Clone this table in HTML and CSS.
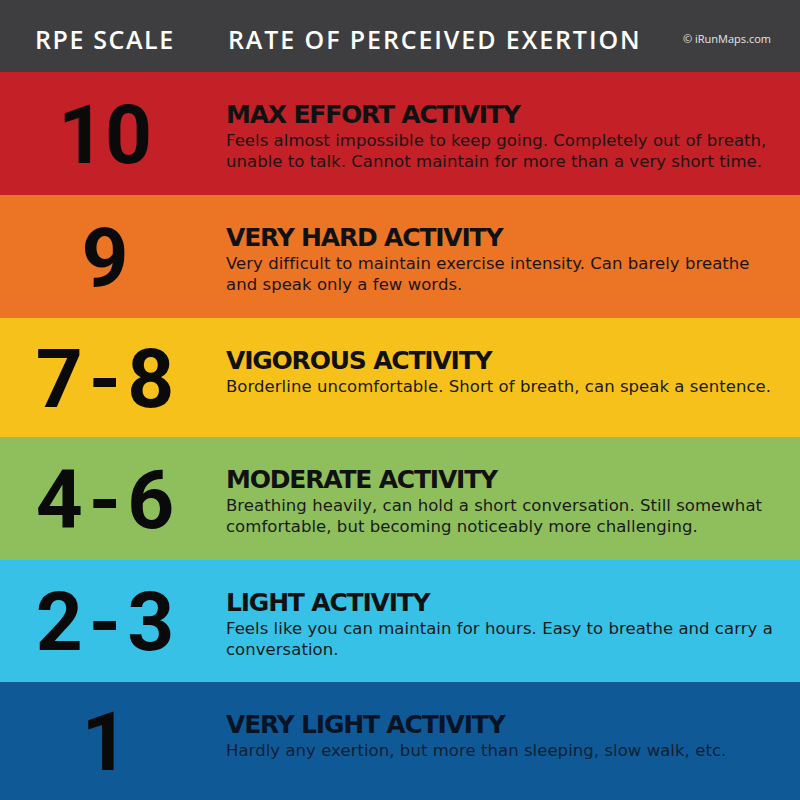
FILE: index.html
```html
<!DOCTYPE html>
<html>
<head>
<meta charset="utf-8">
<link rel="stylesheet" href="styles.css">
</head>
<body>
<div class="chart">
  <header class="head">
    <div class="head-left">RPE SCALE</div>
    <div class="head-title">RATE OF PERCEIVED EXERTION</div>
    <div class="head-credit">© iRunMaps.com</div>
  </header>
  <section class="row r10">
    <div class="num">10</div>
    <div class="text">
      <h2>MAX EFFORT ACTIVITY</h2>
      <p>Feels almost impossible to keep going. Completely out of breath,<br>unable to talk. Cannot maintain for more than a very short time.</p>
    </div>
  </section>
  <section class="row r9">
    <div class="num">9</div>
    <div class="text">
      <h2>VERY HARD ACTIVITY</h2>
      <p>Very difficult to maintain exercise intensity. Can barely breathe<br>and speak only a few words.</p>
    </div>
  </section>
  <section class="row r78">
    <div class="num">7-8</div>
    <div class="text">
      <h2>VIGOROUS ACTIVITY</h2>
      <p>Borderline uncomfortable. Short of breath, can speak a sentence.</p>
    </div>
  </section>
  <section class="row r46">
    <div class="num">4-6</div>
    <div class="text">
      <h2>MODERATE ACTIVITY</h2>
      <p>Breathing heavily, can hold a short conversation. Still somewhat<br>comfortable, but becoming noticeably more challenging.</p>
    </div>
  </section>
  <section class="row r23">
    <div class="num">2-3</div>
    <div class="text">
      <h2>LIGHT ACTIVITY</h2>
      <p>Feels like you can maintain for hours. Easy to breathe and carry a<br>conversation.</p>
    </div>
  </section>
  <section class="row r1">
    <div class="num">1</div>
    <div class="text">
      <h2>VERY LIGHT ACTIVITY</h2>
      <p>Hardly any exertion, but more than sleeping, slow walk, etc.</p>
    </div>
  </section>
</div>
</body>
</html>
```
FILE: styles.css
```css
* { box-sizing: border-box; margin: 0; padding: 0; }
html, body { width: 800px; height: 800px; overflow: hidden; }
body { font-family: "DejaVu Sans", sans-serif; color: #111; }
.chart { display: flex; flex-direction: column; width: 800px; height: 800px; }
.head {
  height: 72px; background: #3e3e40; color: #fff;
  display: flex; align-items: center; padding: 5px 0 0 35px;
  font-family: "Open Sans", sans-serif; font-weight: 600;
}
.head-left { font-size: 25px; width: 193px; letter-spacing: 1.6px; }
.head-title { font-size: 25px; width: 455px; letter-spacing: 1.9px; }
.head-credit { font-size: 11px; font-weight: 400; color: #e6e6e6; }
.row { display: flex; align-items: stretch; }
.num {
  width: 210px; display: flex; align-items: center; justify-content: center;
  font-family: "Roboto", sans-serif; font-weight: 700; font-size: 82px;
  color: #0a0a0a; padding-top: 2px;
}
.num-wide { letter-spacing: 4px; }
.r78 .num, .r46 .num, .r23 .num { letter-spacing: 6px; padding-left: 6px; }
.text { padding: 28px 0 0 16px; }
.text h2 { font-size: 25px; font-weight: 700; letter-spacing: -1.2px; line-height: 30px; color: #111; }
.text p { font-size: 16.5px; line-height: 21px; color: #1e1414; letter-spacing: 0.05px; }
.r10 { height: 123px; background: #c32027; }
.r9 { height: 123px; background: #ec7525; }
.r78 { height: 119px; background: #f6c11b; }
.r46 { height: 123px; background: #8fbf5c; }
.r23 { height: 122px; background: #37c1e7; }
.r1 { height: 118px; background: #0f5a96; }
.r1 .text p { color: #0d1f33; }
.r1 .text h2 { color: #071426; }
.r78 .text p, .r46 .text p, .r23 .text p { color: #1a1a1a; }
```
